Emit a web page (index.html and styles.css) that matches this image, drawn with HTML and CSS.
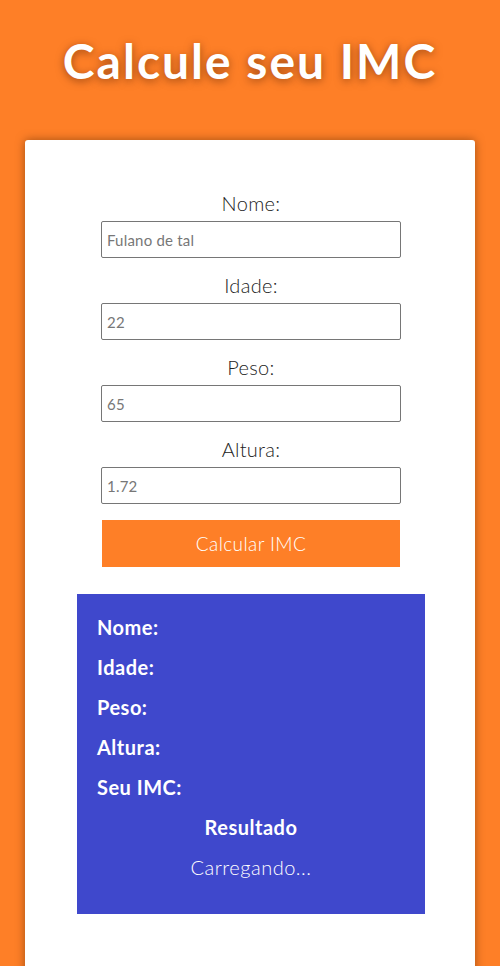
FILE: index.html
```html
<!DOCTYPE html>
<html lang="pt-BR">
<head>
<meta charset="utf-8">
<title>Calcule seu IMC</title>
<link rel="stylesheet" href="styles.css">
</head>
<body>
<header class="header">
  <h1 class="title">Calcule seu IMC</h1>
</header>
<main class="card">
  <form class="form">
    <label class="field">
      <span class="field-label">Nome:</span>
      <input class="field-input" type="text" placeholder="Fulano de tal">
    </label>
    <label class="field">
      <span class="field-label">Idade:</span>
      <input class="field-input" type="text" placeholder="22">
    </label>
    <label class="field">
      <span class="field-label">Peso:</span>
      <input class="field-input" type="text" placeholder="65">
    </label>
    <label class="field">
      <span class="field-label">Altura:</span>
      <input class="field-input" type="text" placeholder="1.72">
    </label>
    <button class="btn" type="button">Calcular IMC</button>
  </form>
  <section class="result">
    <p class="result-row">Nome:</p>
    <p class="result-row">Idade:</p>
    <p class="result-row">Peso:</p>
    <p class="result-row">Altura:</p>
    <p class="result-row">Seu IMC:</p>
    <p class="result-row result-title">Resultado</p>
    <p class="result-row result-status">Carregando...</p>
  </section>
</main>
</body>
</html>
```
FILE: styles.css
```css
* { box-sizing: border-box; }
html, body {
  margin: 0;
  padding: 0;
  background: #fe7f27;
  font-family: "Lato", "Open Sans", sans-serif;
  overflow: hidden;
}
.header {
  padding-top: 33px;
  text-align: center;
}
.title {
  margin: 0;
  font-size: 48px;
  line-height: 56px;
  font-weight: 700;
  color: #fff;
  letter-spacing: 2px;
  text-shadow: 0 2px 8px rgba(80, 30, 0, 0.55);
}
.card {
  width: 450px;
  margin: 51px auto 0;
  background: #fff;
  border-radius: 3px;
  box-shadow: 0 0 10px rgba(90, 40, 0, 0.55);
  padding: 36px 0 60px;
  min-height: 900px;
}
.form {
  display: flex;
  flex-direction: column;
  align-items: center;
  padding-left: 2px;
}
.field {
  display: flex;
  flex-direction: column;
  align-items: center;
  gap: 6px;
  margin-top: 15px;
}
.field-label {
  font-size: 20px;
  line-height: 24px;
  color: #222;
  font-weight: 300;
  letter-spacing: 0.3px;
}
.field-input {
  width: 300px;
  height: 37px;
  border: 1px solid #767676;
  border-radius: 2px;
  padding: 0 5px;
  font-family: inherit;
  font-size: 15px;
  color: #333;
  letter-spacing: 0.2px;
}
.field-input::placeholder { color: #777; }
.btn {
  margin-top: 16px;
  width: 298px;
  height: 47px;
  border: none;
  background: #fe7f27;
  color: #fff;
  font-family: inherit;
  font-size: 19px;
  font-weight: 300;
  letter-spacing: 0.4px;
}
.result {
  width: 348px;
  margin: 27px 0 0 52px;
  background: #3f48cc;
  padding: 13px 20px 27px;
  color: #fff;
}
.result-row {
  margin: 0;
  font-size: 20px;
  line-height: 40px;
  font-weight: 700;
  letter-spacing: 0.5px;
}
.result-title { text-align: center; }
.result-status { text-align: center; font-weight: 300; }
```
